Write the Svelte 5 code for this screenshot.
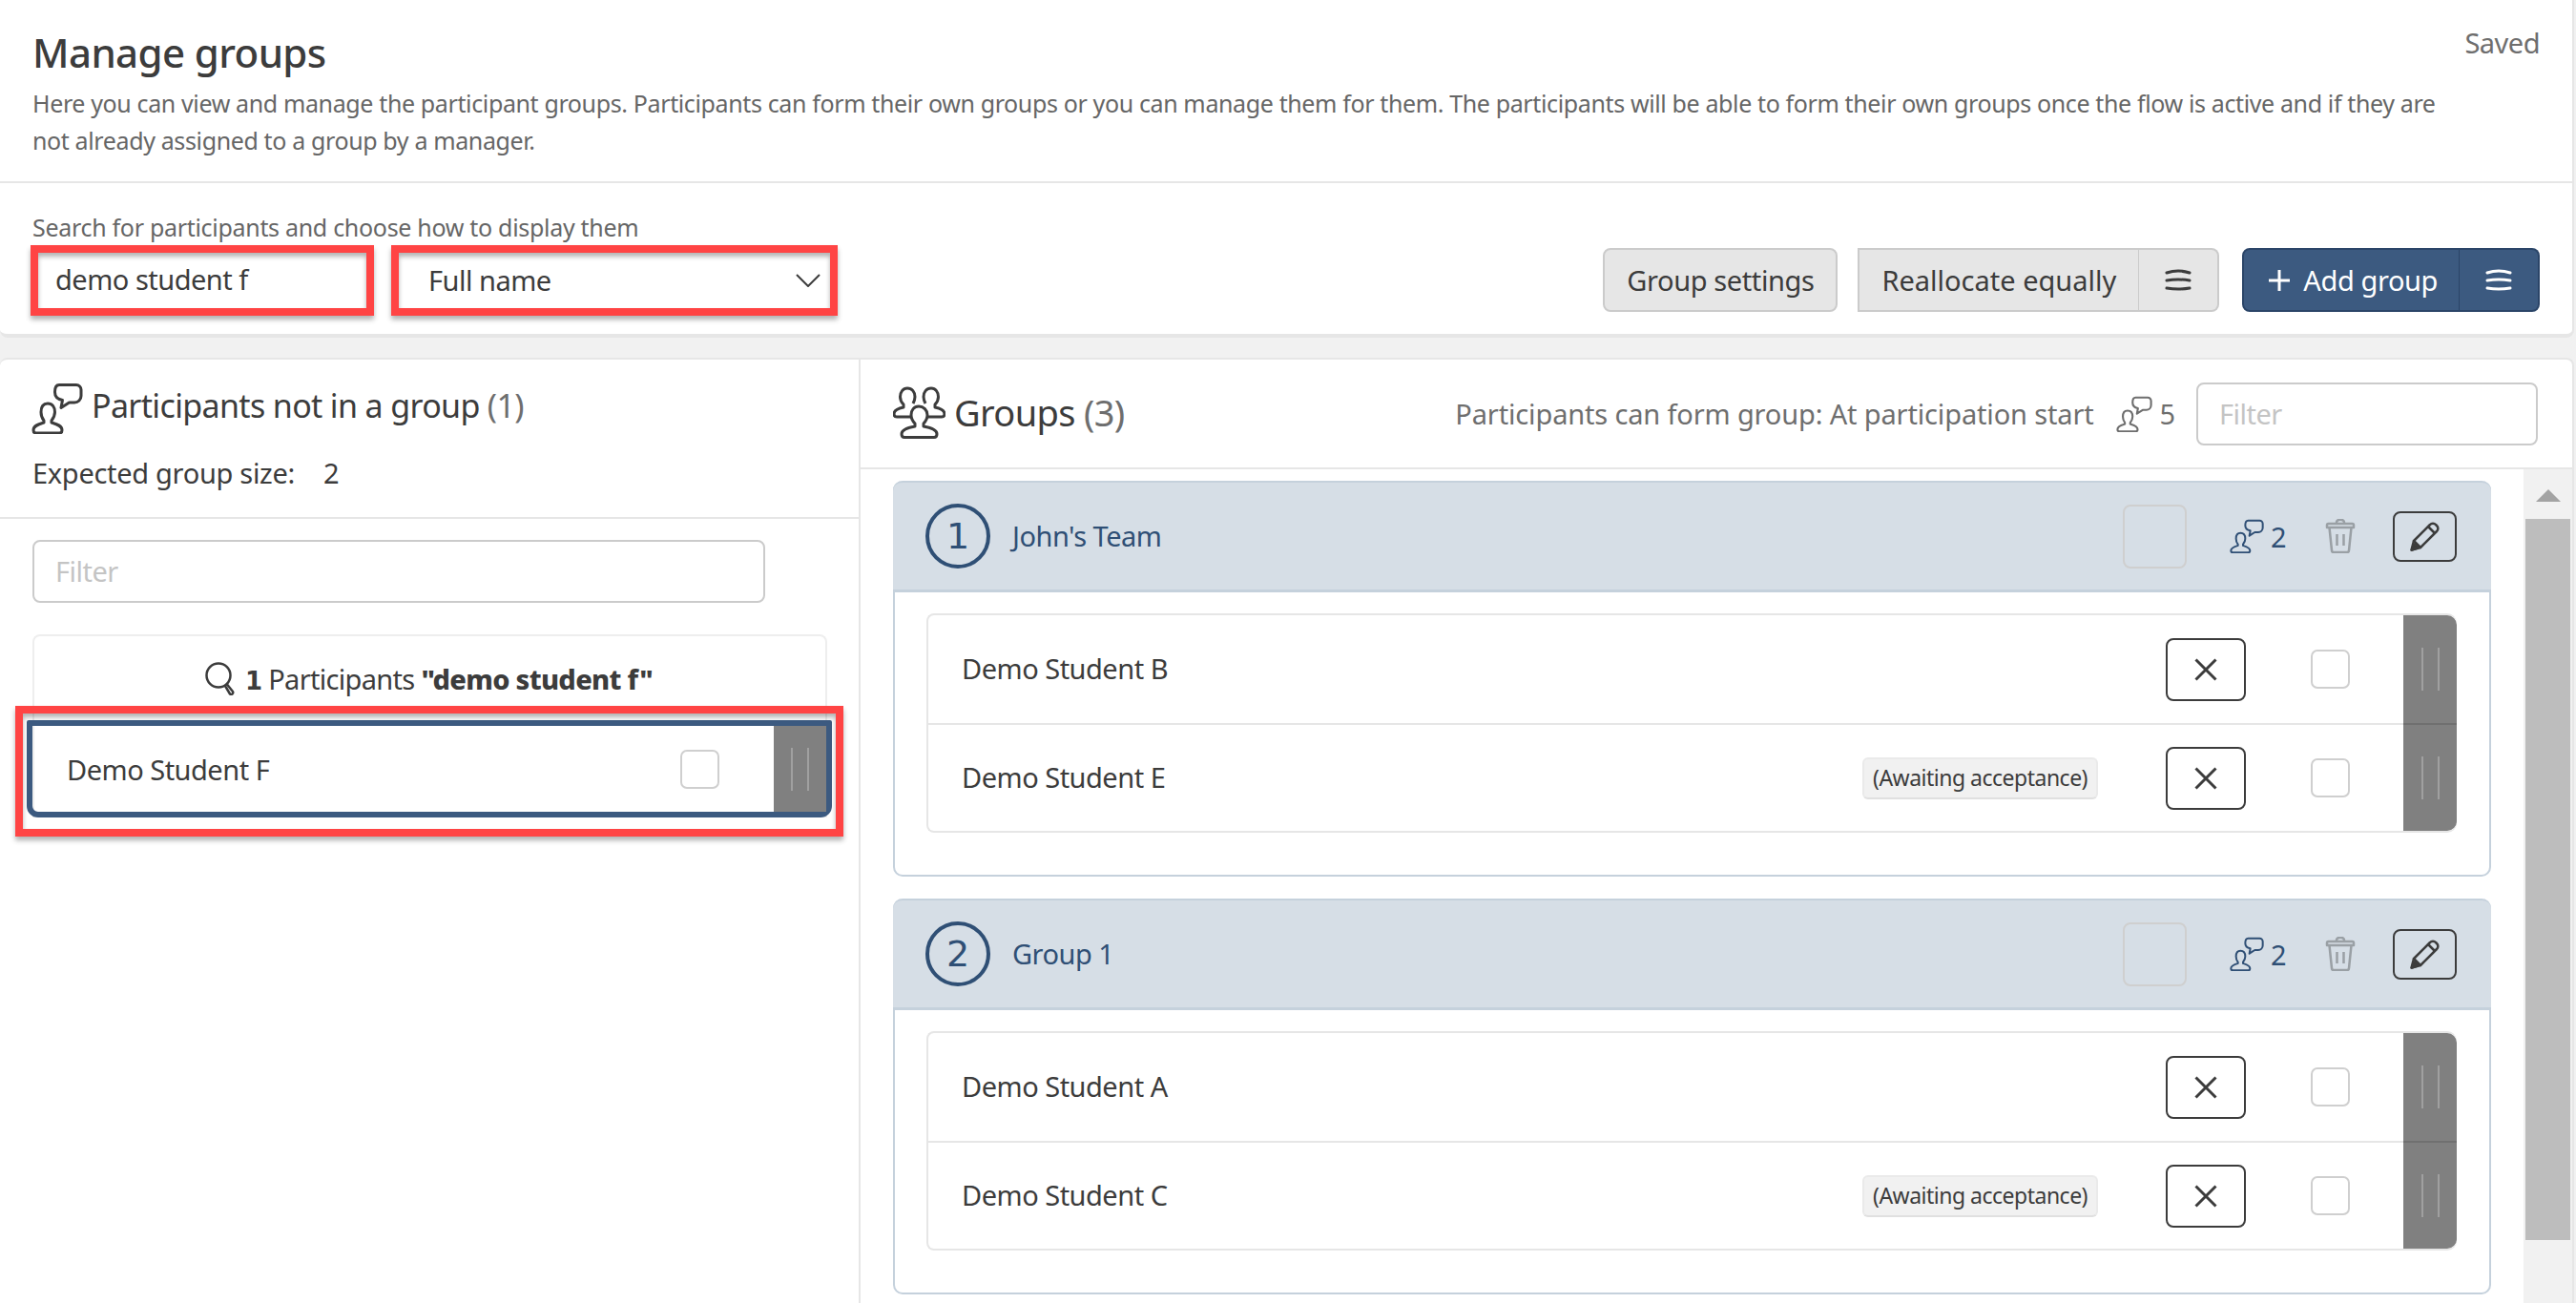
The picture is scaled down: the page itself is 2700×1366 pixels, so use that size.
<script>
  const groups = [
    {
      name: "John's Team",
      members: [
        { name: 'Demo Student B', pending: false },
        { name: 'Demo Student E', pending: true }
      ]
    },
    {
      name: 'Group 1',
      members: [
        { name: 'Demo Student A', pending: false },
        { name: 'Demo Student C', pending: true }
      ]
    }
  ];
</script>

{#snippet personChat()}
  <svg viewBox="0 0 54 54" fill="none" stroke="currentColor" stroke-width="3" stroke-linejoin="round">
    <path d="M29 2.5H47a5 5 0 0 1 5 5V14a7 7 0 0 1-7 7H39.5L31 26.5l1.5-8C27 17.500 24.500 14 24.500 10 24.500 5.500 26 2.500 29 2.500Z" />
    <path d="M17 22C12 22 10 26 10 31 10 35 11.500 38 13 40V42C8 43.500 2 45 2 50 2 52 3 53 5 53H29C31 53 32 52 32 50 32 45 26 43.500 21 42V40C22.500 38 24.500 35 24.500 31 24.500 26 22 22 17 22Z" />
  </svg>
{/snippet}

{#snippet burger()}
  <svg class="burger" viewBox="0 0 28 24" fill="none" stroke="currentColor" stroke-width="3" stroke-linecap="round">
    <path d="M2 4Q14 0 26 4" />
    <path d="M2 12Q14 10 26 12" />
    <path d="M2 20Q14 22 26 20" />
  </svg>
{/snippet}

{#snippet handle()}
  <div class="handle"><i></i><i></i></div>
{/snippet}

<div class="page">
  <section class="card intro">
    <div class="title-row">
      <h1>Manage groups</h1>
      <span class="saved">Saved</span>
    </div>
    <p>Here you can view and manage the participant groups. Participants can form their own groups or you can manage them for them. The participants will be able to form their own groups once the flow is active and if they are not already assigned to a group by a manager.</p>
  </section>

  <section class="card toolbar">
    <div class="label">Search for participants and choose how to display them</div>
    <div class="controls">
      <div class="fields">
        <div class="field callout search">demo student f</div>
        <div class="field callout select">
          <span>Full name</span>
          <svg viewBox="0 0 26 14" fill="none" stroke="currentColor" stroke-width="2"><path d="M1 1l12 12L25 1" /></svg>
        </div>
      </div>
      <div class="actions">
        <button class="btn">Group settings</button>
        <div class="split">
          <button class="btn main square">Reallocate equally</button>
          <button class="btn more">{@render burger()}</button>
        </div>
        <div class="split primary">
          <button class="btn main">
            <svg class="plus" viewBox="0 0 22 22" stroke="currentColor" stroke-width="3"><path d="M11 0v22M0 11h22" /></svg>
            Add group
          </button>
          <button class="btn more">{@render burger()}</button>
        </div>
      </div>
    </div>
  </section>

  <div class="panels">
    <aside class="left">
      <div class="left-head">
        <div class="left-title">
          <span class="icon-chat">{@render personChat()}</span>
          <h2>Participants not in a group <span class="count">(1)</span></h2>
        </div>
        <div class="expected"><span>Expected group size:</span><span>2</span></div>
      </div>
      <div class="input filter-left">Filter</div>
      <div class="results">
        <div class="results-head">
          <svg viewBox="0 0 32 36" fill="none" stroke="currentColor" stroke-width="2.5">
            <circle cx="14" cy="15" r="12.5" />
            <path d="M21 26l2-1.500 6 7.500a2 2 0 0 1-3 2.500Z" stroke-linejoin="round" />
          </svg>
          <span><b class="digit">1</b> Participants <b>"demo student f"</b></span>
        </div>
        <div class="picked callout">
          <span class="picked-name">Demo Student F</span>
          <span class="check"></span>
          {@render handle()}
        </div>
      </div>
    </aside>

    <main class="right">
      <header class="right-head">
        <svg class="icon-groups" viewBox="0 0 55 56" fill="none" stroke="currentColor" stroke-width="3" stroke-linejoin="round">
          <path d="M27 22C22 22 19 26 19 31 19 35 21 38 23 40V43C17 44 9 46 9 51 9 53 10 54.500 12 54.500H43C45 54.500 46 53 46 51 46 46 38 44 32 43V40C34 38 36 35 36 31 36 26 32 22 27 22Z" />
          <path d="M19 33H4C2 33 1 32 1 30 1 26 6 24 11 23V20C9 18 7.500 15 7.500 12 7.500 7 10.500 3 15 3 20 3 23 7 23 12 23 15 22 17 21 19" />
          <path d="M36 33H51C53 33 54 32 54 30 54 26 49 24 44 23V20C46 18 47.500 15 47.500 12 47.500 7 44.500 3 40 3 35 3 32 7 32 12 32 15 33 17 34 19" />
        </svg>
        <h2>Groups <span class="count">(3)</span></h2>
        <div class="meta">
          <span>Participants can form group: At participation start</span>
          <span class="meta-icon">{@render personChat()}</span>
          <span class="meta-num">5</span>
        </div>
        <div class="input filter-right">Filter</div>
      </header>

      <div class="scroller">
        <div class="group-list">
          {#each groups as group, i}
            <article class="group">
              <div class="group-head">
                <span class="num">{i + 1}</span>
                <span class="group-name">{group.name}</span>
                <span class="ghost"></span>
                <span class="size">
                  <span class="size-icon">{@render personChat()}</span>
                  {group.members.length}
                </span>
                <svg class="trash" viewBox="0 0 32 36" fill="none" stroke="currentColor" stroke-width="2.5" stroke-linejoin="round">
                  <path d="M2 9V6.500A1.500 1.500 0 0 1 3.500 5H28.500A1.500 1.500 0 0 1 30 6.500V9Z" />
                  <path d="M12 5V3.500a3.500 2.500 0 0 1 8 0V5" />
                  <path d="M4.500 9l2.500 24a2 2 0 0 0 2 2h14a2 2 0 0 0 2-2l2.500-24" />
                  <path d="M12.500 16v12M19.500 16v12" />
                </svg>
                <button class="pencil" aria-label="Edit group">
                  <svg viewBox="0 0 32 32" fill="none" stroke="currentColor" stroke-width="2.5" stroke-linejoin="round">
                    <path d="M4 21L21 4a4 4 0 0 1 6 0l1 1a4 4 0 0 1 0 6L11 28Z" />
                    <path d="M19 6l7 7M4 21l-2.500 9.500L11 28" />
                    <path d="M2 30.500l2-6 3 1 1 3Z" fill="currentColor" />
                  </svg>
                </button>
              </div>
              <div class="members">
                {#each group.members as member}
                  <div class="member">
                    <span class="member-name">{member.name}</span>
                    {#if member.pending}
                      <span class="badge">(Awaiting acceptance)</span>
                    {/if}
                    <button class="remove" aria-label="Remove">
                      <svg viewBox="0 0 24 24" stroke="currentColor" stroke-width="3"><path d="M1.500 1.500l21 21M22.500 1.500l-21 21" /></svg>
                    </button>
                    <span class="check"></span>
                    {@render handle()}
                  </div>
                {/each}
              </div>
            </article>
          {/each}
        </div>
        <div class="scrollbar">
          <div class="arrow"></div>
          <div class="thumb"></div>
        </div>
      </div>
    </main>
  </div>
</div>

<style>
  :global(body) {
    margin: 0;
    background: #f1f1f1;
  }

  .page {
    width: 2698px;
    height: 1366px;
    overflow: hidden;
    color: #3c3c3c;
    font-family: "Noto Sans", sans-serif;
    font-size: 29px;
    letter-spacing: -0.5px;
  }

  h1, h2, p {
    margin: 0;
    font-weight: 400;
  }

  button {
    font: inherit;
    letter-spacing: inherit;
    color: inherit;
  }

  .card {
    background: #fff;
    box-sizing: border-box;
    border-right: 2px solid #e6e6e6;
  }

  .callout {
    position: relative;
  }

  .callout::after {
    content: '';
    position: absolute;
    inset: -8px;
    border: 8px solid #ff4444;
    box-shadow: 0 4px 5px rgba(0, 0, 0, 0.3), inset 0 4px 5px rgba(0, 0, 0, 0.3);
    pointer-events: none;
  }

  /* intro */
  .intro {
    height: 192px;
    padding: 30px 34px 0;
    border-bottom: 2px solid #e6e6e6;
  }

  .title-row {
    display: flex;
    justify-content: space-between;
  }

  h1 {
    font-size: 42px;
    line-height: 50px;
    font-weight: 500;
    letter-spacing: -0.6px;
  }

  .saved {
    color: #6e6e6e;
    line-height: 30px;
  }

  .intro p {
    max-width: 2540px;
    margin-top: 9px;
    font-size: 25px;
    line-height: 39px;
    letter-spacing: -0.37px;
    color: #666;
  }

  /* toolbar */
  .toolbar {
    height: 162px;
    padding: 28px 34px 0;
    border-bottom: 4px solid #e6e6e6;
    border-radius: 0 0 8px 8px;
  }

  .label {
    font-size: 25px;
    line-height: 36px;
    letter-spacing: -0.3px;
    color: #666;
  }

  .controls {
    display: flex;
    justify-content: space-between;
    align-items: center;
    height: 67px;
    margin-top: 4px;
  }

  .fields {
    display: flex;
    gap: 34px;
    margin-left: 6px;
  }

  .field {
    box-sizing: border-box;
    height: 58px;
    line-height: 56px;
  }

  .search {
    width: 344px;
    padding-left: 18px;
  }

  .select {
    width: 452px;
    padding: 0 10px 0 31px;
    display: flex;
    justify-content: space-between;
    align-items: center;
  }

  .select svg {
    width: 26px;
    height: 14px;
  }

  .actions {
    display: flex;
    gap: 21px;
    letter-spacing: -0.4px;
  }

  .btn {
    box-sizing: border-box;
    height: 67px;
    padding: 0 23px;
    background: #e6e6e6;
    border: 2px solid #cbcbcb;
    border-radius: 8px;
    display: flex;
    align-items: center;
    white-space: nowrap;
    color: #3c3c3c;
  }

  .split {
    display: flex;
  }

  .split .main {
    border-radius: 8px 0 0 8px;
    border-right: 1px solid #cbcbcb;
  }

  .split .main.square {
    padding: 0 23px;
    letter-spacing: 0;
    border-radius: 0;
  }

  .split .more {
    width: 84px;
    justify-content: center;
    padding: 0;
    border-left: 0;
    border-radius: 0 8px 8px 0;
  }

  .primary {
    margin-left: 3px;
  }

  .primary .btn {
    background: #3c5a80;
    border-color: #2b4568;
    color: #fff;
  }

  .primary .main {
    border-right-color: #2b4568;
    padding: 0 22px 0 26px;
  }

  .plus {
    width: 22px;
    height: 22px;
    margin-right: 14px;
  }

  .burger {
    width: 28px;
    height: 24px;
  }

  /* panels */
  .panels {
    display: flex;
    height: 991px;
    margin-top: 21px;
    background: #fff;
    border-right: 2px solid #e6e6e6;
    box-sizing: border-box;
    border-radius: 8px 8px 0 0;
    border-top: 2px solid #e6e6e6;
  }

  .left {
    box-sizing: border-box;
    width: 902px;
    flex: none;
    border-right: 2px solid #e6e6e6;
  }

  .left-head {
    padding: 24px 34px 28px;
    border-bottom: 2px solid #e6e6e6;
  }

  .left-title {
    display: flex;
    align-items: center;
    height: 54px;
    gap: 9px;
  }

  .icon-chat {
    width: 54px;
    height: 54px;
    margin-left: -1px;
  }

  .icon-chat svg {
    display: block;
  }

  h2 {
    font-size: 34px;
    line-height: 44px;
    letter-spacing: -0.65px;
  }

  .left-title h2 {
    margin-top: -6px;
  }

  .count {
    color: #6e6e6e;
  }

  .expected {
    display: flex;
    gap: 30px;
    margin-top: 23px;
    line-height: 36px;
    letter-spacing: -0.3px;
  }

  .input {
    box-sizing: border-box;
    height: 66px;
    line-height: 62px;
    padding-left: 22px;
    border: 2px solid #cbcbcb;
    border-radius: 8px;
    color: #c4c4c4;
    background: #fff;
  }

  .filter-left {
    width: 768px;
    margin: 22px 0 0 34px;
  }

  .results {
    box-sizing: border-box;
    width: 833px;
    margin: 33px 0 0 34px;
    border: 2px solid #eee;
    border-bottom: 0;
    border-radius: 8px 8px 0 0;
  }

  .results-head {
    height: 88px;
    display: flex;
    justify-content: center;
    align-items: center;
    gap: 10px;
    letter-spacing: -0.68px;
  }

  .results-head svg {
    width: 32px;
    height: 36px;
    margin-left: -2px;
  }

  .results-head b {
    font-weight: 800;
  }

  .results-head .digit {
    font-family: "DejaVu Sans", sans-serif;
    font-size: 26px;
    font-weight: 700;
  }

  .picked {
    box-sizing: border-box;
    display: flex;
    align-items: center;
    height: 102px;
    margin: 0 -7px 0 -8px;
    border: 6px solid #3c5a80;
    border-radius: 2px 2px 12px 12px;
  }

  .picked::after {
    inset: -21px -18px -26px -18px;
  }

  .picked-name {
    flex: 1;
    padding-left: 36px;
  }

  .picked .check {
    margin-right: 57px;
  }

  .picked .handle {
    align-self: stretch;
    width: 55px;
  }

  .check {
    box-sizing: border-box;
    flex: none;
    width: 41px;
    height: 41px;
    border: 2px solid #cfcfcf;
    border-radius: 7px;
    background: #fff;
  }

  .handle {
    flex: none;
    display: flex;
    justify-content: center;
    align-items: center;
    gap: 15px;
    background: #808080;
  }

  .handle i {
    width: 2px;
    height: 45px;
    background: #a0a0a0;
  }

  /* groups */
  .right {
    flex: 1;
    min-width: 0;
    display: flex;
    flex-direction: column;
  }

  .right-head {
    box-sizing: border-box;
    flex: none;
    display: flex;
    align-items: center;
    height: 115px;
    padding: 0 36px 0 34px;
    border-bottom: 2px solid #e6e6e6;
  }

  .icon-groups {
    width: 55px;
    height: 56px;
    margin-right: 9px;
    margin-top: -4px;
  }

  .right-head h2 {
    font-size: 38px;
    line-height: 46px;
    margin-top: -3px;
  }

  .meta {
    margin-left: auto;
    display: flex;
    align-items: center;
    font-size: 29px;
    letter-spacing: -0.15px;
    color: #6e6e6e;
  }

  .meta-icon {
    width: 38px;
    height: 38px;
    margin: 0 8px 0 23px;
  }

  .filter-right {
    width: 358px;
    margin-left: 22px;
  }

  .scroller {
    flex: 1;
    min-height: 0;
    display: flex;
    overflow: hidden;
  }

  .group-list {
    flex: 1;
    min-width: 0;
    padding: 12px 34px 0;
  }

  .group {
    box-sizing: border-box;
    height: 415px;
    margin-bottom: 23px;
    border: 2px solid #c5d1dc;
    border-top: 0;
    border-radius: 10px;
  }

  .group-head {
    box-sizing: border-box;
    display: flex;
    align-items: center;
    height: 117px;
    margin: 0 -2px;
    padding: 0 36px 0 34px;
    background: #d6dee6;
    border-top: 2px solid #c5d1dc;
    border-bottom: 3px solid #c5d1dc;
    border-radius: 10px 10px 0 0;
    color: #2f4f75;
  }

  .num {
    box-sizing: border-box;
    width: 68px;
    height: 68px;
    border: 4px solid #2f4f75;
    border-radius: 50%;
    display: flex;
    justify-content: center;
    align-items: center;
    font-family: "DejaVu Sans", sans-serif;
    font-size: 38px;
    letter-spacing: 0;
  }

  .group-name {
    flex: 1;
    margin: -2px 0 0 23px;
  }

  .ghost {
    box-sizing: border-box;
    width: 67px;
    height: 67px;
    border: 2px solid #cfcfcf;
    border-radius: 8px;
  }

  .size {
    display: flex;
    align-items: center;
    width: 64px;
    margin-left: 45px;
    gap: 7px;
  }

  .size-icon {
    display: block;
    width: 36px;
    height: 36px;
  }

  .trash {
    width: 32px;
    height: 36px;
    margin-left: 36px;
    color: #9aa0a5;
  }

  .pencil {
    box-sizing: border-box;
    width: 67px;
    height: 53px;
    margin-left: 39px;
    padding: 0;
    background: transparent;
    border: 2px solid #3c3c3c;
    border-radius: 8px;
    color: #3c3c3c;
    display: flex;
    justify-content: center;
    align-items: center;
  }

  .pencil svg {
    width: 32px;
    height: 32px;
  }

  .members {
    margin: 22px 34px 0 33px;
    border: 2px solid #e6e6e6;
    border-right: 0;
    border-radius: 8px 10px 10px 8px;
  }

  .member {
    box-sizing: border-box;
    display: flex;
    align-items: center;
    height: 113px;
  }

  .member + .member {
    border-top: 2px solid #e6e6e6;
  }

  .member-name {
    flex: 1;
    margin-top: -2px;
    padding-left: 35px;
  }

  .badge {
    box-sizing: border-box;
    width: 247px;
    height: 44px;
    line-height: 38px;
    text-align: center;
    font-size: 23px;
    background: #f1f1f1;
    border: 2px solid #eaeaea;
    border-bottom-color: #e0e0e0;
    border-radius: 6px;
    white-space: nowrap;
  }

  .remove {
    box-sizing: border-box;
    width: 84px;
    height: 66px;
    margin-left: 71px;
    padding: 0;
    background: #fff;
    border: 2px solid #3c3c3c;
    border-radius: 8px;
    display: flex;
    justify-content: center;
    align-items: center;
  }

  .remove svg {
    width: 24px;
    height: 24px;
  }

  .member .check {
    margin: 0 56px 0 68px;
  }

  .member .handle {
    align-self: stretch;
    width: 56px;
  }

  .member:first-child .handle {
    border-radius: 0 10px 0 0;
  }

  .member:last-child .handle {
    border-radius: 0 0 10px 0;
  }

  .member + .member .handle {
    box-shadow: 0 -2px 0 #707070;
  }

  .scrollbar {
    flex: none;
    width: 51px;
    height: 100%;
    background: #f1f1f1;
  }

  .arrow {
    width: 0;
    margin: 21px auto 18px;
    border: 13px solid transparent;
    border-top: 0;
    border-bottom: 13px solid #a3a3a3;
  }

  .thumb {
    width: 47px;
    height: 756px;
    margin: 0 auto;
    background: #bdbdbd;
  }
</style>
